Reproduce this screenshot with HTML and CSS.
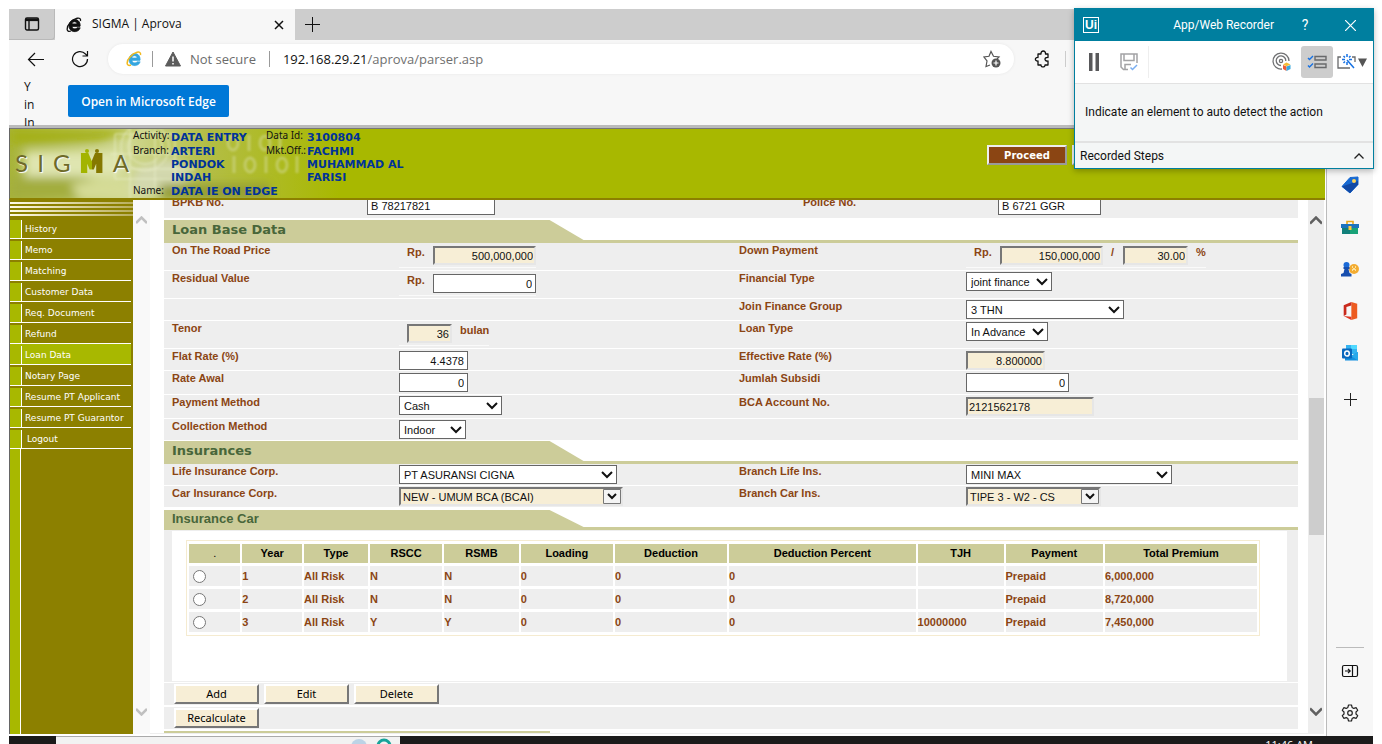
FILE: index.html
```html
<!DOCTYPE html>
<html lang="en">
<head>
<meta charset="utf-8">
<title>SIGMA | Aprova</title>
<link rel="stylesheet" href="styles.css">
</head>
<body>
<div class="desktop">
  <div class="tabstrip">
    <button class="tab-actions" aria-label="Tab actions"><svg width="16" height="16" viewBox="0 0 16 16" fill="none" stroke="#111" stroke-width="1.4"><rect x="1.500" y="2" width="13" height="12" rx="1.500"/><path d="M2 3.800h12" stroke-width="2.600"/><path d="M5 5v9"/></svg></button>
    <div class="tab">
      <svg width="16" height="16" viewBox="0 0 16 16"><path d="M14 9.400H6C6.200 12.200 10 12.500 11 10.800h3.200C12.500 16.500 2.800 16 3 8.500 3.200 1 14.500 0 14.200 9z M6 6.900h5C10.700 4 6.300 4 6 6.900z" fill="#111" stroke="#111" stroke-width=".8" fill-rule="evenodd"/><path d="M14.500 4C15.500-1 8 1 4 6 0 10 0 16 5 14" fill="none" stroke="#111" stroke-width="1.300"/></svg>
      <span class="tab-title">SIGMA | Aprova</span>
      <button class="icon-btn" aria-label="Close tab"><svg width="10" height="10" viewBox="0 0 10 10" stroke="#111" stroke-width="1.500"><path d="M1 1l8 8M9 1l-8 8"/></svg></button>
    </div>
    <button class="icon-btn new-tab" aria-label="New tab"><svg width="15" height="15" viewBox="0 0 15 15" stroke="#111" stroke-width="1"><path d="M7.500 0v15M0 7.500h15"/></svg></button>
  </div>
  <div class="toolbar">
    <button class="icon-btn" aria-label="Back"><svg width="18" height="16" viewBox="0 0 18 16" fill="none" stroke="#111" stroke-width="1.200"><path d="M17 8.500H1.500M8 2L1.500 8.500 8 15"/></svg></button>
    <button class="icon-btn reload" aria-label="Refresh"><svg width="18" height="18" viewBox="0 0 18 18" fill="none" stroke="#111" stroke-width="1.200"><path d="M16.500 9A7.500 7.500 0 1 1 14.500 4L16 5.500M16.500 1v5h-5"/></svg></button>
    <div class="address">
      <svg width="16" height="16" viewBox="0 0 16 16"><path d="M14 9.400H6C6.200 12.200 10 12.500 11 10.800h3.200C12.500 16.500 2.800 16 3 8.500 3.200 1 14.500 0 14.200 9z M6 6.900h5C10.700 4 6.300 4 6 6.900z" fill="#35a6df" stroke="#35a6df" stroke-width=".6" fill-rule="evenodd"/><path d="M14.500 4C15.500-1 8 1 4 6 0 10 0 16 5 14" fill="none" stroke="#f2b91d" stroke-width="1.500"/></svg>
      <i class="divider"></i>
      <svg width="16" height="16" viewBox="0 0 16 16"><path d="M8 1l7.500 14H.5z" fill="#5c5c5c" stroke="#5c5c5c" stroke-linejoin="round"/><path d="M8 5.500v5M8 12v1.600" stroke="#fff" stroke-width="1.500"/></svg>
      <span class="insecure">Not secure</span>
      <i class="divider"></i>
      <span class="url">192.168.29.21<span>/aprova/parser.asp</span></span>
      <svg width="18" height="18" viewBox="0 0 18 18" fill="none" stroke="#555" stroke-width="1.200"><path d="M7 15l-4 1.500 1-5.500L1 7l5-.700L8 1.500l2.500 4.800L16 7l-2 2"/><circle cx="13" cy="13" r="4.500" fill="#555" stroke="none"/><path d="M13 10.500v5M10.500 13h5" stroke="#fff"/></svg>
    </div>
    <button class="icon-btn ext" aria-label="Extensions"><svg width="16" height="18" viewBox="0 0 16 18" fill="none" stroke="#111" stroke-width="1.300"><path d="M4 4h3c-.5-4 5-4 4.500 0H14v3.500c-4-.5-4 4 0 3.500V15h-3c.3 2.500-4.300 2.500-4 0H4v-4C.5 11.500.5 7 4 7.500z" stroke-linejoin="round"/></svg></button>
    <i class="divider faint"></i>
  </div>
  <div class="middle">
    <div class="page">
      <div class="notice">
        <p>Y in In</p>
        <button class="edge-btn">Open in Microsoft Edge</button>
      </div>
      <header class="banner">
        <svg class="banner-art" width="330" height="70" viewBox="0 0 330 70" aria-hidden="true">
          <defs>
            <linearGradient id="fade" x1="0" x2="1" y1="0" y2="0"><stop offset="0" stop-color="#a8b43a"/><stop offset=".35" stop-color="#d0d893"/><stop offset=".6" stop-color="#b3bd45"/><stop offset="1" stop-color="#a8b800"/></linearGradient>
            <filter id="soft"><feGaussianBlur stdDeviation="5"/></filter>
            <filter id="haze"><feGaussianBlur stdDeviation="1"/></filter>
          </defs>
          <rect width="330" height="70" fill="url(#fade)"/>
          <g filter="url(#soft)">
            <path d="M0 0h130L90 12 0 16z" fill="#a4b012"/>
            <path d="M0 50c30-15 60-8 90 4l40 2v14H0z" fill="#a3ad3c"/>
            <path d="M15 22h95v26H15z" fill="#dfe5b0"/>
            <path d="M60 56c30-8 60-6 80 4v10H70z" fill="#d5dc97"/>
            <path d="M125 40l35-12 25 14-25 22h-40z" fill="#d3d8ae"/>
            <path d="M150 55h110v15H150z" fill="#949d35"/>
          </g>
          <g fill="none" stroke="#ecf0cd" stroke-width="1" filter="url(#haze)" opacity=".8"><circle cx="135" cy="18" r="24"/><circle cx="135" cy="18" r="17"/><path d="M105 5h60v45h-60zM120 0v70M145 0v60M100 25h80M100 40h85"/></g>
          <g fill="none" stroke="#d2d994" stroke-width="3" filter="url(#haze)" opacity=".55"><ellipse cx="223" cy="14" rx="5" ry="7"/><ellipse cx="255" cy="14" rx="5" ry="7"/><path d="M239 6v16M270 6v16M224 27v17M256 27v17M287 27v17"/><ellipse cx="240" cy="36" rx="5" ry="7"/><ellipse cx="272" cy="36" rx="5" ry="7"/></g>
        </svg>
        <div class="sigma"><span>S</span><span>I</span><span>G</span><b>M</b><span>A</span></div>
        <dl class="facts">
          <dt>Activity:</dt><dd>DATA ENTRY</dd><dt>Data Id:</dt><dd>3100804</dd>
          <dt>Branch:</dt><dd>ARTERI PONDOK INDAH</dd><dt>Mkt.Off.:</dt><dd>FACHMI MUHAMMAD AL FARISI</dd>
          <dt>Name:</dt><dd class="wide">DATA IE ON EDGE</dd>
        </dl>
        <div class="banner-actions"><button class="proceed">Proceed</button><button class="proceed" aria-label="Next action"></button></div>
      </header>
      <div class="work">
        <nav class="menu">
          <div class="stripes"></div>
          <a href="#">History</a><a href="#">Memo</a><a href="#">Matching</a><a href="#">Customer Data</a><a href="#">Req. Document</a><a href="#">Refund</a><a href="#" class="current">Loan Data</a><a href="#">Notary Page</a><a href="#">Resume PT Applicant</a><a href="#">Resume PT Guarantor</a><a href="#" class="logout">Logout</a>
          <div class="menu-rest"></div>
        </nav>
        <div class="scroll scroll-off"><svg width="11" height="9" viewBox="0 0 11 9"><path d="M0 7l5.500-5.500L11 7"/></svg><svg width="11" height="9" viewBox="0 0 11 9"><path d="M0 2l5.500 5.500L11 2"/></svg></div>
        <main class="content">
          <form class="form">
            <div class="row vehicle"><label for="bpkb">BPKB No.</label><div class="field"><input id="bpkb" class="w128 left" value="B 78217821"></div><label for="police">Police No.</label><div class="field"><input id="police" class="w103 left" value="B 6721 GGR"></div></div>
            <h2 class="section"><span>Loan Base Data</span></h2>
            <div class="row tall"><label for="otr">On The Road Price</label><div class="field"><span class="group"><span class="pre">Rp.</span><input id="otr" class="w103 locked" value="500,000,000" readonly></span></div><label for="down">Down Payment</label><div class="field"><span class="group"><span class="pre">Rp.</span><input id="down" class="w103 locked" value="150,000,000" readonly><span class="slash">/</span><input class="w65 locked" aria-label="Down payment percent" value="30.00" readonly><span class="pct">%</span></span></div></div>
            <div class="row tall"><label for="resid">Residual Value</label><div class="field"><span class="group"><span class="pre">Rp.</span><input id="resid" class="w103" value="0"></span></div><label for="fin">Financial Type</label><div class="field"><select id="fin" class="w86"><option>joint finance</option></select></div></div>
            <div class="row short"><span></span><span></span><label for="grp">Join Finance Group</label><div class="field"><select id="grp" class="w158"><option>3 THN</option></select></div></div>
            <div class="row tall"><label for="tenor">Tenor</label><div class="field"><span class="group tenor"><input id="tenor" class="w45 locked" value="36" readonly><span class="unit">bulan</span></span></div><label for="ltype">Loan Type</label><div class="field"><select id="ltype" class="w82"><option>In Advance</option></select></div></div>
            <div class="row short"><label for="flat">Flat Rate (%)</label><div class="field"><input id="flat" class="w69" value="4.4378"></div><label for="eff">Effective Rate (%)</label><div class="field"><input id="eff" class="w78 locked" value="8.800000" readonly></div></div>
            <div class="row mid"><label for="awal">Rate Awal</label><div class="field"><input id="awal" class="w69" value="0"></div><label for="sub">Jumlah Subsidi</label><div class="field"><input id="sub" class="w103" value="0"></div></div>
            <div class="row mid"><label for="pay">Payment Method</label><div class="field"><select id="pay" class="w103"><option>Cash</option></select></div><label for="bca">BCA Account No.</label><div class="field"><input id="bca" class="w128 locked left" value="2121562178" readonly></div></div>
            <div class="row short"><label for="coll">Collection Method</label><div class="field"><select id="coll" class="w67"><option>Indoor</option></select></div><span></span><span></span></div>
            <h2 class="section"><span>Insurances</span></h2>
            <div class="row short"><label for="life">Life Insurance Corp.</label><div class="field"><select id="life" class="w218"><option>PT ASURANSI CIGNA</option></select></div><label for="blife">Branch Life Ins.</label><div class="field"><select id="blife" class="w206"><option>MINI MAX</option></select></div></div>
            <div class="row short"><label for="car">Car Insurance Corp.</label><div class="field"><select id="car" class="w224 locked"><option>NEW - UMUM BCA (BCAI)</option></select></div><label for="bcar">Branch Car Ins.</label><div class="field"><select id="bcar" class="w135 locked"><option>TIPE 3 - W2 - CS</option></select></div></div>
            <h3 class="section sub"><span>Insurance Car</span></h3>
            <div class="frame">
              <div class="table-box">
              <table>
                <colgroup><col class="c52"><col class="c59"><col class="c64"><col class="c72"><col class="c75"><col class="c92"><col class="c112"><col class="c187"><col class="c86"><col class="c98"><col class="c151"></colgroup>
                <thead><tr><th class="dot">.</th><th>Year</th><th>Type</th><th>RSCC</th><th>RSMB</th><th>Loading</th><th>Deduction</th><th>Deduction Percent</th><th>TJH</th><th>Payment</th><th>Total Premium</th></tr></thead>
                <tbody>
                  <tr><td><input type="radio" name="yr" aria-label="Year 1"></td><td>1</td><td>All Risk</td><td>N</td><td>N</td><td>0</td><td>0</td><td>0</td><td></td><td>Prepaid</td><td>6,000,000</td></tr>
                  <tr><td><input type="radio" name="yr" aria-label="Year 2"></td><td>2</td><td>All Risk</td><td>N</td><td>N</td><td>0</td><td>0</td><td>0</td><td></td><td>Prepaid</td><td>8,720,000</td></tr>
                  <tr><td><input type="radio" name="yr" aria-label="Year 3"></td><td>3</td><td>All Risk</td><td>Y</td><td>Y</td><td>0</td><td>0</td><td>0</td><td>10000000</td><td>Prepaid</td><td>7,450,000</td></tr>
                </tbody>
              </table>
              </div>
            </div>
            <div class="buttons"><button type="button">Add</button><button type="button">Edit</button><button type="button">Delete</button></div>
            <div class="buttons"><button type="button">Recalculate</button></div>
            <div class="next-section"></div>
          </form>
        </main>
        <div class="scroll"><svg width="12" height="9" viewBox="0 0 12 9"><path d="M0 7.500l6-6 6 6"/></svg><i class="thumb"></i><svg width="12" height="9" viewBox="0 0 12 9"><path d="M0 1.500l6 6 6-6"/></svg></div>
      </div>
    </div>
    <aside class="sidebar">
      <button class="icon-btn" aria-label="Shopping"><svg width="18" height="18" viewBox="0 0 18 18"><path d="M9 1.500L17 1v7.500L9 17 1 10.500z" fill="#1769d2" stroke="#1769d2" stroke-linejoin="round"/><path d="M1 10.500L9 17l8-8.500V5z" fill="#1249a5"/><circle cx="13" cy="5" r="2" fill="#ffd45a"/></svg></button>
      <button class="icon-btn" aria-label="Tools"><svg width="18" height="18" viewBox="0 0 18 18"><path d="M6 6V3.500h6V6" fill="none" stroke="#e7a71b" stroke-width="1.600"/><path d="M0 6h18v4H0z" fill="#1c73bd"/><path d="M1 10h16v6H1z" fill="#11807a"/><path d="M9 10h8v6H9z" fill="#18a277"/><path d="M7.500 8h3v4h-3z" fill="#ffc83d"/></svg></button>
      <button class="icon-btn" aria-label="Games"><svg width="18" height="18" viewBox="0 0 18 18"><circle cx="13" cy="9" r="5" fill="#f3ac32"/><path d="M11 7h1M14 7h1M11 10h1M14 10h1M13 8v2" stroke="#fff2c0" stroke-width="1.500"/><circle cx="5.500" cy="5" r="3" fill="#1c6bd8"/><path d="M2.500 7h6v2H7.500l1 4 2 1v2.500H0V14l2.500-1 1-4h-1z" fill="#174eae"/></svg></button>
      <button class="icon-btn" aria-label="Office"><svg width="18" height="18" viewBox="0 0 18 20"><path d="M10.500 0L17 2v16l-6.500 2z" fill="#ed5b20"/><path d="M10.500 0L2 3.500v12l3-1.500V5.500l5.500-1.500z" fill="#c92a1d"/><path d="M2 15.500l8.500 1V20z" fill="#df3722"/></svg></button>
      <button class="icon-btn" aria-label="Outlook"><svg width="18" height="18" viewBox="0 0 18 18"><path d="M5 1h11v9H5z" fill="#35b3f0"/><path d="M10 1h6v4h-6z" fill="#50d9ff"/><path d="M4 8l6 4 7-4v8.500H4z" fill="#1490df"/><path d="M17 8v8.500L10 12z" fill="#28a8ea"/><rect x="1" y="4.500" width="10" height="10" rx="1" fill="#0867bd"/><ellipse cx="6" cy="9.500" rx="2.300" ry="2.600" fill="none" stroke="#fff" stroke-width="1.500"/></svg></button>
      <button class="icon-btn add" aria-label="Add"><svg width="13" height="13" viewBox="0 0 13 13" stroke="#222" stroke-width="1"><path d="M6.500 0v13M0 6.500h13"/></svg></button>
      <div class="side-bottom">
        <button class="icon-btn" aria-label="Hide sidebar"><svg width="18" height="14" viewBox="0 0 18 14" fill="none" stroke="#111" stroke-width="1.200"><rect x="1.500" y="1.500" width="15" height="11" rx="1.500"/><path d="M11.500 1.500v11M4 7h5M7 4.800L9.200 7 7 9.200"/></svg></button>
        <button class="icon-btn" aria-label="Settings"><svg width="18" height="18" viewBox="0 0 18 18" fill="none" stroke="#222" stroke-width="1.200"><path d="M7.500 1h3l.6 2.400 1.700 1 2.400-.7 1.500 2.600L15 8v2l1.700 1.700-1.500 2.600-2.400-.7-1.700 1-.6 2.400h-3l-.6-2.400-1.700-1-2.400.7-1.500-2.600L3 10V8L1.300 6.300l1.500-2.600 2.400.7 1.700-1z" stroke-linejoin="round"/><circle cx="9" cy="9" r="2.300"/></svg></button>
      </div>
    </aside>
  </div>
  <footer class="taskbar">
    <div class="search"><svg width="44" height="8" viewBox="0 0 44 8"><circle cx="10" cy="10" r="8" fill="#bcd3e6"/><circle cx="35" cy="9" r="6" fill="none" stroke="#16a39a" stroke-width="3"/></svg></div>
    <span class="clock">11:46 AM</span>
  </footer>

  <section class="recorder">
    <div class="rec-title">
      <span class="ui-logo">Ui</span><span class="rec-name">App/Web Recorder</span>
      <button class="rec-help" aria-label="Help">?</button>
      <button class="icon-btn" aria-label="Close"><svg width="11" height="11" viewBox="0 0 11 11" stroke="#fff" stroke-width="1.200"><path d="M0 0l11 11M11 0L0 11"/></svg></button>
    </div>
    <div class="rec-tools">
      <button class="icon-btn" aria-label="Pause"><svg width="10" height="18" viewBox="0 0 10 18"><path d="M0 0h3.500v18H0zM6.500 0H10v18H6.500z" fill="#58585a"/></svg></button>
      <button class="icon-btn save" aria-label="Save"><svg width="18" height="18" viewBox="0 0 18 18" fill="none" stroke="#a3a3a5" stroke-width="1.500"><path d="M8 16.500H3.500L1 14V1h16v9M4 1v6.500h10V1M5 16v-4.500h6"/><path d="M10.500 14.500l2 2 4.500-4.500" stroke="#7aaef0"/></svg></button>
      <i class="rec-split"></i>
      <button class="icon-btn target" aria-label="Target"><svg width="20" height="20" viewBox="0 0 20 20" fill="none" stroke="#707173" stroke-width="1.300"><path d="M10 17A8 8 0 1 1 17 9M9 13.500A4.800 4.800 0 1 1 13.800 9"/><circle cx="9" cy="9" r="1.600"/><path d="M11 13l3.500 1.500V19L11 17z" fill="#ee5b38" stroke="none"/><path d="M14.500 14.500L18.500 13v4l-4 2z" fill="#36a7df" stroke="none"/><path d="M11 12.500l3.500-2 4 2-4 1.800z" fill="#f6bb32" stroke="none"/></svg></button>
      <button class="icon-btn steps-toggle" aria-label="Toggle steps"><svg width="20" height="16" viewBox="0 0 20 16" fill="none" stroke="#68696b" stroke-width="1.400"><path d="M8 2.500h11v3.500H8zM8 10h11v3.500H8z"/><path d="M1 4l1.500 1.500L6 2M1 11.500L2.500 13 6 9.500" stroke="#1671e3"/></svg></button>
      <button class="icon-btn magic" aria-label="Auto detection options"><svg width="30" height="16" viewBox="0 0 30 16" fill="none"><path d="M4 3H1v11h12M15 3h3v5" stroke="#68696b" stroke-width="1.300"/><path d="M10 6l7 8M10 0v3M10 8v3M5 5.500h3M12 5.500h3M6.500 2l1.500 1.500M13.500 2L12 3.500M6.500 9L8 7.500" stroke="#1671e3" stroke-width="1.500"/><path d="M21 4.500h9L25.500 13z" fill="#555"/></svg></button>
    </div>
    <p class="rec-msg">Indicate an element to auto detect the action</p>
    <div class="rec-steps"><span>Recorded Steps</span><svg width="10" height="6" viewBox="0 0 10 6" fill="none" stroke="#222" stroke-width="1.300"><path d="M.5 5.500L5 1l4.500 4.500"/></svg></div>
  </section>
</div>
</body>
</html>
```

FILE: styles.css
```css
* { box-sizing: border-box; }
body { margin: 0; background: #fff; font-family: "Liberation Sans", Arial, sans-serif; font-size: 11px; color: #111; }
button, input, select { font: inherit; margin: 0; }
p, h2, h3, dl, dd { margin: 0; }
svg { display: block; flex: none; }

.desktop { height: 100vh; min-height: 700px; padding: 9px 9px 0; display: flex; flex-direction: column; overflow: hidden; position: relative; }
.icon-btn { border: 0; padding: 0; background: none; display: flex; align-items: center; justify-content: center; }

/* Browser chrome */
.tabstrip { display: flex; height: 31px; background: #cdcdcd; flex: none; font-family: "Open Sans", sans-serif; font-size: 12px; }
.tab-actions { width: 46px; border: 0; border-right: 1px solid #b9b9b9; border-bottom: 1px solid #b9b9b9; border-radius: 0 0 4px 0; background: #cdcdcd; padding: 0 0 0 15px; }
.tab { width: 240px; background: #f7f7f7; display: flex; align-items: center; padding: 0 11px; gap: 10px; }
.tab-title { flex: 1; white-space: nowrap; padding-bottom: 2px; }
.new-tab { margin-left: 10px; }
.toolbar { display: flex; align-items: center; height: 38px; background: #f7f7f7; flex: none; padding-left: 18px; }
.reload { margin-left: 26px; }
.address { height: 30px; flex: 0 0 auto; width: calc(100% - 440px); background: #fff; border-radius: 15px; margin-left: 19px; padding: 0 13px 0 18px; display: flex; align-items: center; font-family: "Open Sans", sans-serif; font-size: 13px; box-shadow: 0 0 3px #e6e6e6; }
.address svg:nth-of-type(2) { margin-right: 9px; }
.divider { width: 1px; height: 16px; background: #9a9a9a; margin: 0 13px; }
.address .divider:first-of-type { margin: 0 12px 0 10px; }
.insecure { color: #6b6b6b; }
.url { flex: 1; color: #111; }
.url span { color: #707070; }
.ext { margin-left: 20px; }
.divider.faint { background: #ccc; margin-left: 15px; }

.middle { display: flex; flex: 1; min-height: 0; }
.page { flex: 1; min-width: 0; display: flex; flex-direction: column; border-right: 1px solid #bbb; background: #fff; }
.notice { height: 50px; flex: none; background: #f7f7f7; border-bottom: 2px solid #bbb; box-shadow: inset 0 -1px #bbb; display: flex; align-items: flex-start; gap: 32px; padding: 0 15px; overflow: hidden; font-family: "Open Sans", sans-serif; font-size: 12px; }
.notice p { width: 12px; line-height: 18px; }
.edge-btn { margin-top: 7px; width: 161px; height: 32px; border: 0; border-radius: 2px; background: #0078d7; color: #fff; font-weight: 600; padding: 0; white-space: nowrap; }

/* Application banner */
.banner { height: 72px; flex: none; margin-right: 1px; background: #a8b800; border-bottom: 2px solid #8c8000; border-left: 1px solid #666; position: relative; display: flex; overflow: hidden; box-shadow: inset 0 1px #777; }
.banner-art { position: absolute; left: 0; top: 1px; }
.sigma { position: relative; width: 123px; flex: none; height: 70px; padding: 20px 4px 0 5px; display: flex; align-items: baseline; justify-content: space-between; font-family: "Lato", sans-serif; font-weight: 400; font-size: 24px; line-height: 30px; color: #6e6a28; text-shadow: 1px 1px 1px #fff; }
.sigma b { font-family: "DejaVu Sans", sans-serif; font-size: 24px; line-height: 30px; background: linear-gradient(90deg, #a3b400 50%, #857800 50%); background-clip: text; -webkit-text-fill-color: transparent; -webkit-text-stroke: 2px transparent; text-shadow: none; position: relative; }
.sigma b::before { content: ""; position: absolute; left: 5px; top: 0; width: 4px; height: 4px; border-radius: 2px; background: #a3b400; box-shadow: 10px 0 #857800; }
.facts { position: relative; display: grid; grid-template-columns: 38px 95px 41px 120px; align-content: start; font-family: "DejaVu Sans", sans-serif; }
.facts dt { font: 10px/15px "Noto Sans", sans-serif; white-space: nowrap; }
.facts dd { font-size: 11px; line-height: 13px; font-weight: bold; color: #003399; padding-top: 3px; }
.facts dd:nth-of-type(n+3) { padding-top: 1px; }
.facts .wide { grid-column: span 3; padding-top: 1px; }
.facts dt:nth-of-type(n+3) { line-height: 12px; }
.banner-actions { position: relative; margin: 17px 173px 0 auto; display: flex; gap: 5px; align-items: flex-start; }
.proceed { width: 80px; height: 20px; border: 2px outset #eee; background: #8b4513; color: #fff; font-family: "DejaVu Sans", sans-serif; font-size: 10px; font-weight: bold; padding: 0; }

/* Work area */
.work { flex: 1; min-height: 0; display: flex; margin-bottom: 2px; padding-right: 2px; }
.menu { width: 124px; flex: none; background: #8c8000; border-left: 1px solid #666; display: flex; flex-direction: column; font-family: "DejaVu Sans", sans-serif; font-size: 9px; }
.stripes { height: 18px; background: repeating-linear-gradient(#8c8000 0 2px, transparent 2px 4px), linear-gradient(90deg, #fffbe8, #b8ae5c); }
.menu a { margin-right: 2px; height: 21px; border-bottom: 1px solid #fff; color: #fff; text-decoration: none; display: flex; align-items: center; gap: 3px; white-space: nowrap; line-height: 10px; padding-top: 1px; }
.menu a::before { content: ""; width: 11px; height: 18px; background: #a8b800; border-right: 1px solid #fff; flex: none; }
.menu .current { background: #a8b800; }
.menu .logout { gap: 5px; }
.menu-rest { flex: 1; width: 11px; background: #a8b800; border-right: 1px solid #fff; }
.scroll { width: 16px; flex: none; background: #eee; display: flex; flex-direction: column; align-items: center; justify-content: space-between; padding: 16px 0 18px; }
.scroll path { fill: none; stroke: #606060; stroke-width: 2.5; }
.scroll-off { width: 17px; background: #f9f9f9; }
.scroll-off path { stroke: #c0c0c0; }
.thumb { width: 15px; height: 137px; background: #cdcdcd; }
.content { flex: 1; min-width: 0; overflow: hidden; padding: 0 10px 0 14px; border-bottom: 1px solid #eee; }
.form { margin-top: -6px; }

.row { display: grid; grid-template-columns: 235fr 332fr 235fr 332fr; background: #eee; margin-bottom: 1px; align-items: start; color: #8b4513; font-weight: bold; }
.row label { padding: 0 0 0 8px; line-height: 14px; }
.tall { height: 27px; }
.mid { height: 23px; }
.short { height: 21px; }
.vehicle { grid-template-columns: 203fr 428fr 203fr 300fr; height: 24px; }
.field { display: flex; align-items: flex-start; }
.group { display: flex; height: 25px; border-bottom: 1px solid #fafafa; padding: 1px 0 0 8px; line-height: 17px; }
.pre { width: 26px; }
.slash { width: 20px; padding-left: 8px; }
.pct, .unit { padding-left: 8px; }
.form input:not([type="radio"]) { height: 19px; border: 1px solid #666; background: #fff; color: #111; text-align: right; padding: 1px 3px 0; margin-top: 2px; font-weight: normal; }
.form select { appearance: none; height: 19px; border: 1px solid #666; border-radius: 0; color: #111; padding: 0 18px 0 4px; margin-top: 1px; background: #fff url("data:image/svg+xml,%3Csvg xmlns='http://www.w3.org/2000/svg' width='12' height='8'%3E%3Cpath d='M1 1l5 5 5-5' fill='none' stroke='%23111' stroke-width='2'/%3E%3C/svg%3E") no-repeat right 3px center; font-weight: normal; }
.vehicle label { padding-top: 1px; }
.form input.left { text-align: left; }
.form input.locked:not([type="radio"]) { border: 2px solid; border-color: #777 #e6e6e6 #e6e6e6 #777; background: #f7eed6; padding: 0 1px; }
.form select.locked { border: 2px solid; border-color: #777 #e6e6e6 #e6e6e6 #777; padding-left: 2px; background: url("data:image/svg+xml,%3Csvg xmlns='http://www.w3.org/2000/svg' width='18' height='15'%3E%3Cpath d='M.5.5h17v14H.5z' fill='%23f4f4f4' stroke='%23777'/%3E%3Cpath d='M5 5l4 4 4-4' fill='none' stroke='%23111' stroke-width='2'/%3E%3C/svg%3E") no-repeat right center, #f7eed6; }
.w45 { width: 45px; } .w65 { width: 65px; } .w67 { width: 67px; } .w69 { width: 69px; } .w78 { width: 79px; }
.w82 { width: 82px; } .w86 { width: 86px; } .w103 { width: 103px; } .w128 { width: 128px; } .w135 { width: 135px; }
.w158 { width: 158px; } .w206 { width: 206px; } .w218 { width: 218px; } .w224 { width: 224px; }

.section { height: 23px; margin-top: 2px; border-bottom: 3px solid #cccc99; font-family: "DejaVu Sans", sans-serif; font-size: 13px; color: #48663a; line-height: 20px; }
.short + .section { margin-top: 1px; }
.section span { display: block; width: 37%; height: 20px; padding-left: 8px; background: #cccc99; clip-path: polygon(0 0, calc(100% - 34px) 0, 100% 100%, 0 100%); }
.short + .section.sub { height: 20px; margin-top: 3px; line-height: 17px; font-family: "Liberation Sans", Arial, sans-serif; }
.section.sub span { height: 17px; }

.frame { border: solid #eee; border-width: 1px 11px 1px 8px; height: 152px; padding: 9px 27px 0 14px; }
.table-box { border: 1px solid #f5ebd0; }
table { width: 100%; table-layout: fixed; border-collapse: separate; border-spacing: 2px 3px; }
th { height: 19px; background: #cccc99; color: #000; padding: 0; line-height: 19px; }
th.dot { font-weight: normal; }
td { height: 20px; background: #eee; color: #8b4513; font-weight: bold; padding: 0; line-height: 19px; }
td input { display: block; width: 13px; height: 13px; margin: 1px 0 0 4px; }
.c52 { width: 4.9%; } .c59 { width: 5.7%; } .c64 { width: 6.1%; } .c72 { width: 6.9%; } .c75 { width: 7.1%; } .c92 { width: 8.8%; }
.c112 { width: 10.7%; } .c187 { width: 17.8%; } .c86 { width: 8.2%; } .c98 { width: 9.3%; } .c151 { width: 14.5%; }

.buttons { display: flex; gap: 5px; height: 22px; margin-top: 1px; margin-bottom: 2px; padding: 1px 0 0 10px; background: #eee; }
.buttons button { width: 85px; height: 20px; border: 2px solid; border-color: #fff #777 #777 #fff; background: #f7eed6; color: #000; font-family: "Noto Sans", sans-serif; line-height: 14px; padding: 0; }
.next-section { width: 34%; height: 2px; background: #cccc99; }

/* Browser sidebar */
.sidebar { width: 46px; flex: none; background: #f7f7f7; display: flex; flex-direction: column; align-items: center; gap: 24px; padding-top: 98px; }
.add { margin-top: 7px; }
.side-bottom { margin-top: auto; width: 28px; height: 89px; border-top: 1px solid #bbb; display: flex; flex-direction: column; align-items: center; gap: 26px; padding-top: 16px; }

.taskbar { height: 8px; flex: none; background: #1b1b1b; display: flex; padding-left: 47px; overflow: hidden; color: #fff; }
.search { width: 344px; background: #f2f2f2; border-top: 1px solid #aaa; padding-left: 293px; }
.clock { margin: 3px 60px 0 auto; line-height: 12px; font-family: "Open Sans", sans-serif; font-size: 11px; }

/* Floating recorder window */
.recorder { position: absolute; top: 8px; right: 8px; width: 300px; border: 1px solid #007f9f; background: #f4f6f6; box-shadow: 0 2px 6px #0004; font-family: "Roboto", sans-serif; font-size: 12px; }
.rec-title { height: 32px; background: #007f9f; color: #fff; display: flex; align-items: center; padding: 0 17px 0 8px; }
.ui-logo { width: 16px; height: 16px; border: 1px solid #fff; font: bold 12px/14px "Liberation Sans", sans-serif; text-align: center; }
.rec-name { margin-left: auto; }
.rec-help { border: 0; background: none; color: #fff; font-size: 14px; width: 18px; margin: 0 31px 0 22px; padding: 0; }
.rec-tools { height: 43px; background: #fff; border-bottom: 1px solid #e2e2e2; display: flex; align-items: center; padding: 0 6px 0 14px; }
.save { margin-left: 21px; }
.rec-split { width: 1px; height: 32px; background: #eee; margin-left: 10px; }
.target { margin-left: auto; }
.steps-toggle { width: 32px; height: 32px; border-radius: 3px; background: #cdcdcd; margin: 0 4px 0 9px; }
.rec-msg { line-height: 57px; padding-left: 10px; white-space: nowrap; }
.rec-steps { height: 27px; border-top: 2px solid #e2e2e2; display: flex; align-items: center; justify-content: space-between; padding: 0 9px 0 5px; }
```
